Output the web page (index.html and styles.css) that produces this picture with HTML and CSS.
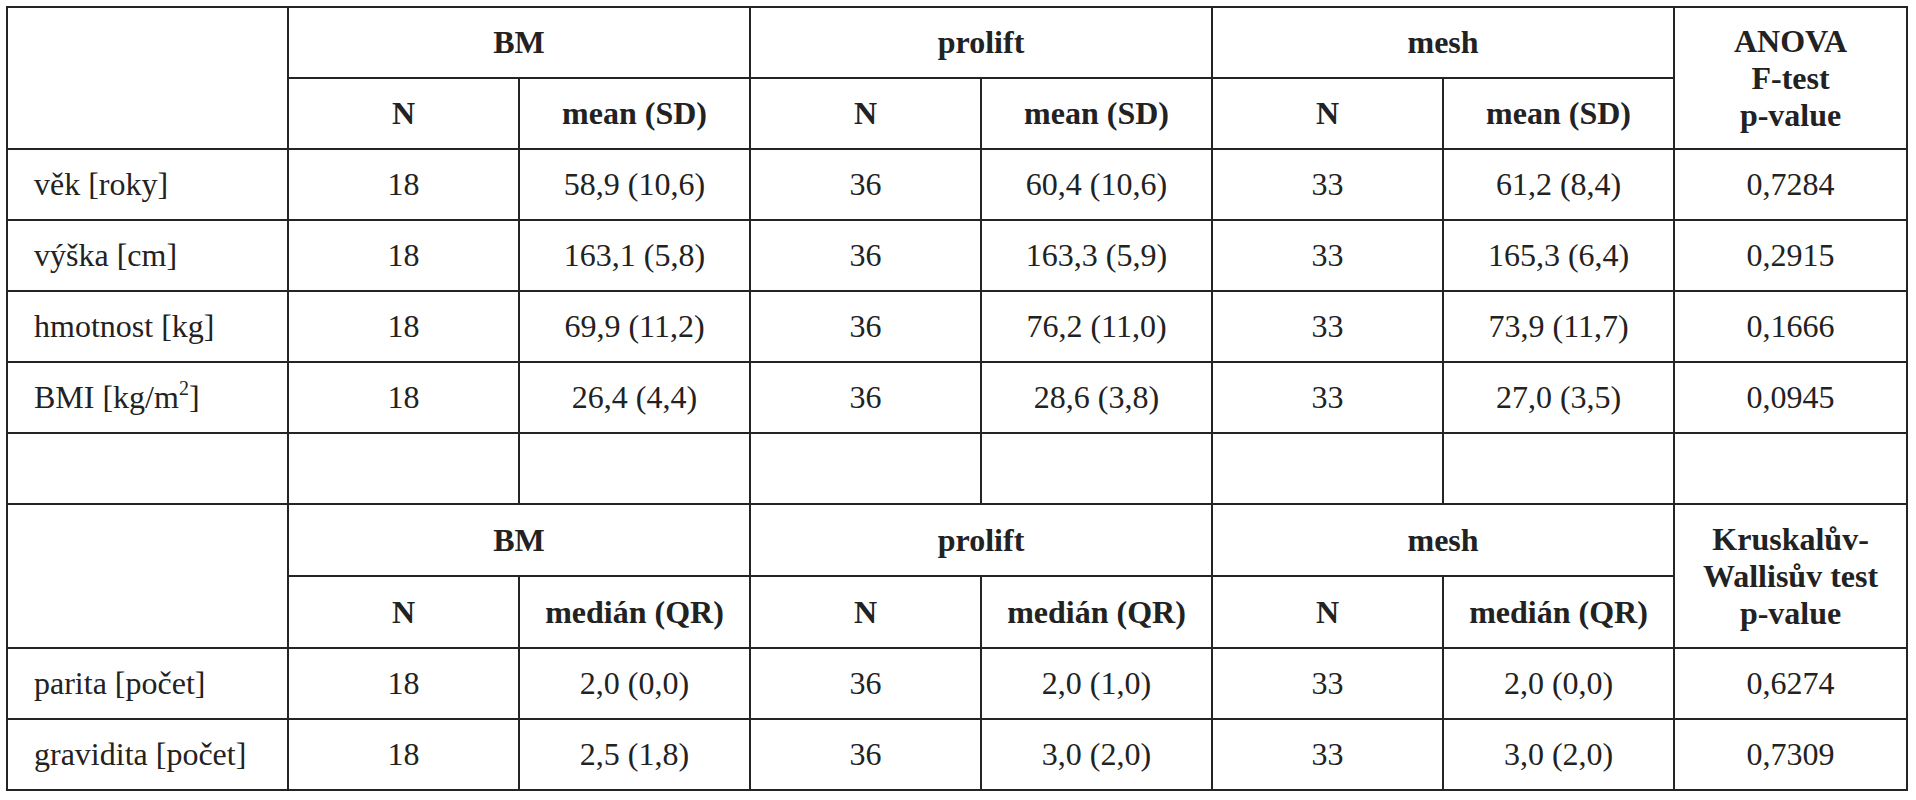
FILE: index.html
```html
<!DOCTYPE html>
<html lang="cs">
<head>
<meta charset="utf-8">
<title>Tabulka</title>
<link rel="stylesheet" href="styles.css">
</head>
<body>
<table class="stats">
  <colgroup>
    <col class="c-label">
    <col class="c-data"><col class="c-data">
    <col class="c-data"><col class="c-data">
    <col class="c-data"><col class="c-data">
    <col class="c-test">
  </colgroup>
  <tbody>
    <tr class="r">
      <td rowspan="2"></td>
      <th colspan="2">BM</th>
      <th colspan="2">prolift</th>
      <th colspan="2">mesh</th>
      <th rowspan="2" class="multi">ANOVA<br>F-test<br>p-value</th>
    </tr>
    <tr class="r">
      <th>N</th><th>mean (SD)</th>
      <th>N</th><th>mean (SD)</th>
      <th>N</th><th>mean (SD)</th>
    </tr>
    <tr class="r">
      <td class="label">věk [roky]</td>
      <td>18</td><td>58,9 (10,6)</td>
      <td>36</td><td>60,4 (10,6)</td>
      <td>33</td><td>61,2 (8,4)</td>
      <td>0,7284</td>
    </tr>
    <tr class="r">
      <td class="label">výška [cm]</td>
      <td>18</td><td>163,1 (5,8)</td>
      <td>36</td><td>163,3 (5,9)</td>
      <td>33</td><td>165,3 (6,4)</td>
      <td>0,2915</td>
    </tr>
    <tr class="r">
      <td class="label">hmotnost [kg]</td>
      <td>18</td><td>69,9 (11,2)</td>
      <td>36</td><td>76,2 (11,0)</td>
      <td>33</td><td>73,9 (11,7)</td>
      <td>0,1666</td>
    </tr>
    <tr class="r">
      <td class="label">BMI [kg/m<sup>2</sup>]</td>
      <td>18</td><td>26,4 (4,4)</td>
      <td>36</td><td>28,6 (3,8)</td>
      <td>33</td><td>27,0 (3,5)</td>
      <td>0,0945</td>
    </tr>
    <tr class="r">
      <td></td><td></td><td></td><td></td><td></td><td></td><td></td><td></td>
    </tr>
    <tr class="r2">
      <td rowspan="2"></td>
      <th colspan="2">BM</th>
      <th colspan="2">prolift</th>
      <th colspan="2">mesh</th>
      <th rowspan="2" class="multi">Kruskalův-<br>Wallisův test<br>p-value</th>
    </tr>
    <tr class="r2">
      <th>N</th><th>medián (QR)</th>
      <th>N</th><th>medián (QR)</th>
      <th>N</th><th>medián (QR)</th>
    </tr>
    <tr class="r">
      <td class="label">parita [počet]</td>
      <td>18</td><td>2,0 (0,0)</td>
      <td>36</td><td>2,0 (1,0)</td>
      <td>33</td><td>2,0 (0,0)</td>
      <td>0,6274</td>
    </tr>
    <tr class="r">
      <td class="label">gravidita [počet]</td>
      <td>18</td><td>2,5 (1,8)</td>
      <td>36</td><td>3,0 (2,0)</td>
      <td>33</td><td>3,0 (2,0)</td>
      <td>0,7309</td>
    </tr>
  </tbody>
</table>
</body>
</html>
```

FILE: styles.css
```css
html, body {
  margin: 0;
  padding: 0;
  background: #ffffff;
}

body,
.stats,
.stats td,
.stats th {
  font-family: "Times New Roman", Tinos, "Liberation Serif", "Nimbus Roman", "Nimbus Roman No9 L", "Noto Serif", "FreeSerif", Times, "DejaVu Serif", serif;
}

body {
  font-size: 32px;
  color: #222222;
}

.stats {
  margin: 6px 0 0 6px;
  border-collapse: collapse;
  table-layout: fixed;
  width: 1902px;
  font-size: 32px;
}

.c-label { width: 281px; }
.c-data { width: 231px; }
.c-test { width: 233px; }

.stats td,
.stats th {
  border: 2px solid #242424;
  padding: 0;
  text-align: center;
  vertical-align: middle;
  font-weight: normal;
  font-size: 32px;
  line-height: normal;
  white-space: nowrap;
  color: #222222;
}

.stats th {
  font-weight: bold;
}

.stats th.multi {
  line-height: 37px;
}

.stats td.label {
  text-align: left;
  padding-left: 26px;
}

.stats sup {
  font-size: 20px;
  line-height: 0;
  vertical-align: 13px;
}

.r { height: 71px; }
.r2 { height: 72px; }
```
